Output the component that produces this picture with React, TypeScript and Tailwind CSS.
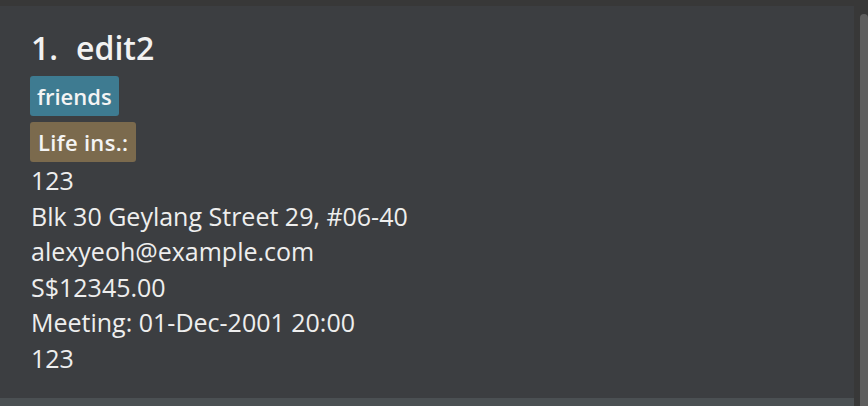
import React from 'react';

const DETAILS = [
  '123',
  'Blk 30 Geylang Street 29, #06-40',
  'alexyeoh@example.com',
  'S$12345.00',
  'Meeting: 01-Dec-2001 20:00',
  '123',
];

const App: React.FC = () => {
  return (
    <div
      className="flex h-[406px] w-[868px] overflow-hidden bg-[#383838]"
      style={{ fontFamily: '"Open Sans", "Noto Sans", sans-serif' }}
    >
      <div className="flex w-[854px] shrink-0 flex-col pt-[6px]">
        <div className="flex h-[392px] shrink-0 flex-col bg-[#3c3e41] pl-[30px] pt-[22px]">
          <div className="flex items-baseline pl-[1px] text-[32px] font-semibold leading-[40px] text-[#f2f2f2]">
            <span>1.</span>
            <span className="ml-[18px]">edit2</span>
          </div>
          <div className="mt-[8px] flex flex-col items-start gap-[6px]">
            <span className="rounded-[3px] bg-[#3e7b91] px-[7px] text-[22px] font-semibold leading-[40px] text-[#f4f4f4]">
              friends
            </span>
            <span className="rounded-[3px] bg-[#7b6a4d] px-[8px] text-[22px] font-semibold leading-[40px] tracking-[0.3px] text-[#f4f4f4]">
              Life ins.:
            </span>
          </div>
          <div className="mt-[1px] flex flex-col pl-[1px] text-[25px] leading-[35.6px] text-[#eeeeee]">
            {DETAILS.map((line, i) => (
              <span key={i}>{line}</span>
            ))}
          </div>
        </div>
        <div className="h-[20px] shrink-0 bg-[#4b5053]" />
      </div>
      <div className="ml-[6px] mt-[14px] w-[8px] rounded-t-[6px] bg-[#5f5f5f]" />
    </div>
  );
};

export default App;
